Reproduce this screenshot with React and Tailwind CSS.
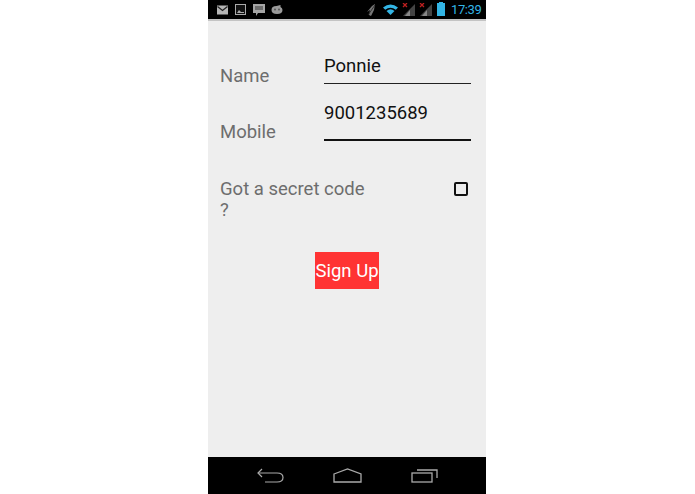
import React from "react";

const Mail = () => (
  <svg width="11" height="10" viewBox="0 0 11 10"><rect width="11" height="9" y="0.5" fill="#b5b5b5" /><path d="M0.500 1.500 L5.500 5.500 L10.500 1.500" fill="none" stroke="#222" strokeWidth="1.3" /></svg>
);
const Pic = () => (
  <svg width="11" height="11" viewBox="0 0 11 11"><rect x="0.5" y="0.5" width="10" height="10" fill="#111" stroke="#aaa" /><path d="M2 9 L4 6 L6 8 L9 8 L9 9 Z" fill="#aaa" /></svg>
);
const Talk = () => (
  <svg width="12" height="12" viewBox="0 0 12 12"><path d="M0 0 H12 V9 H5 L3 12 V9 H0 Z" fill="#a5a5a5" /><path d="M2 3 H10 M2 5 H10" stroke="#333" strokeWidth="1" /></svg>
);
const Bot = () => (
  <svg width="12" height="9" viewBox="0 0 11 9"><path d="M0 5 Q0 1 5 1 L9 0 L9 2 Q11 3 11 5 Q11 9 5.500 9 Q0 9 0 5 Z" fill="#9a9a9a" /><circle cx="3.500" cy="4.500" r="1" fill="#555" /><circle cx="7.500" cy="4.500" r="1" fill="#555" /></svg>
);
const Signal = () => (
  <svg width="14" height="13" viewBox="0 0 14 13">
    <path d="M13 1 V13 H1 Z" fill="#444" />
    <path d="M8 7 V13 H3 Z" fill="#888" />
    <path d="M1 0 L5 4 M5 0 L1 4" stroke="#c02020" strokeWidth="1.300" />
  </svg>
);

export default function App() {
  return (
    <div className="h-[494px] w-[695px] bg-white flex font-['Roboto',sans-serif]">
      <div className="ml-[208px] w-[278px] h-full flex flex-col">
        <div className="h-[19px] shrink-0 bg-black flex items-center justify-between pl-[9px] pr-[4px]">
          <div className="flex items-center gap-[7px]">
            <Mail /><Pic /><Talk /><span className="-ml-[1px]"><Bot /></span>
          </div>
          <div className="flex items-center">
            <svg width="10" height="12" viewBox="0 0 10 12" className="mr-[6px]">
              <path d="M5 2 L8 0 L7 6 L4 12 L2 11 L3 6 L0 8 Z" fill="#777" />
              <path d="M1 11 L8 1" stroke="#222" strokeWidth="0.800" />
            </svg>
            <svg width="15" height="11" viewBox="0 0 15 11" className="mr-[4px]">
              <path d="M0 3.500 Q7.500 -2.500 15 3.500 L12.800 5.800 Q7.500 1.500 2.200 5.800 Z" fill="#33b5e5" />
              <path d="M3.500 7 Q7.500 3.500 11.500 7 L7.500 11 Z" fill="#33b5e5" />
            </svg>
            <Signal />
            <span className="w-[3px]" />
            <Signal />
            <div className="ml-[4px] mr-[6px] w-[8px] h-[13px] bg-[#33b5e5] relative">
              <span className="absolute -top-[1px] left-[2px] w-[4px] h-[1px] bg-[#33b5e5]" />
            </div>
            <span className="text-[13px] tracking-[-0.4px] leading-none text-[#33b5e5] w-[31px] whitespace-nowrap">17:39</span>
          </div>
        </div>
        <div className="h-[2px] shrink-0 bg-[#c4c4c4]" />

        <div className="flex-1 bg-[#eeeeee] px-[12px] flex flex-col">
          <div className="flex mt-[24px] h-[38px]">
            <div className="w-[104px] text-[18.5px] leading-[21px] text-[#6d6d6d] pt-[21px]">Name</div>
            <div className="w-[147px] border-b border-[#222] h-[39px] text-[18.5px] leading-[21px] text-[#111] pt-[11px]">Ponnie</div>
          </div>
          <div className="flex h-[57px]">
            <div className="w-[104px] text-[18.5px] leading-[21px] text-[#6d6d6d] pt-[39px]">Mobile</div>
            <div className="w-[147px] border-b-2 border-[#111] h-[58px] text-[18.5px] leading-[21px] text-[#111] pt-[20px]">9001235689</div>
          </div>
          <div className="flex justify-between mt-[39px]">
            <div className="w-[150px] text-[18.5px] leading-[21px] text-[#6d6d6d]">Got a secret code ?</div>
            <div className="mt-[3px] mr-[6px] w-[14px] h-[14px] rounded-[2px] border-2 border-[#111]" />
          </div>
          <button className="self-center mt-[31px] w-[64px] h-[37px] pt-[2px] bg-[#ff3333] text-white text-[18.5px] whitespace-nowrap flex items-center justify-center">Sign Up</button>
        </div>

        <div className="h-[37px] shrink-0 bg-black flex items-center justify-center gap-[49px]">
          <svg width="27" height="15" viewBox="0 0 27 15" fill="none" stroke="#aaa" strokeWidth="1.200">
            <path d="M1 5 H20 Q26 5 26 9.500 Q26 14 20 14 H8" />
            <path d="M5 1 L1 5 L5 9" />
          </svg>
          <svg width="29" height="15" viewBox="0 0 29 15" fill="none" stroke="#aaa" strokeWidth="1.300">
            <path d="M1 6 L14.500 1 L28 6 V14 H1 Z" />
          </svg>
          <svg width="27" height="15" viewBox="0 0 27 15" fill="none" stroke="#aaa" strokeWidth="1.300">
            <rect x="1" y="5" width="20" height="9" />
            <path d="M6 2 H26 V10" />
          </svg>
        </div>
      </div>
    </div>
  );
}
